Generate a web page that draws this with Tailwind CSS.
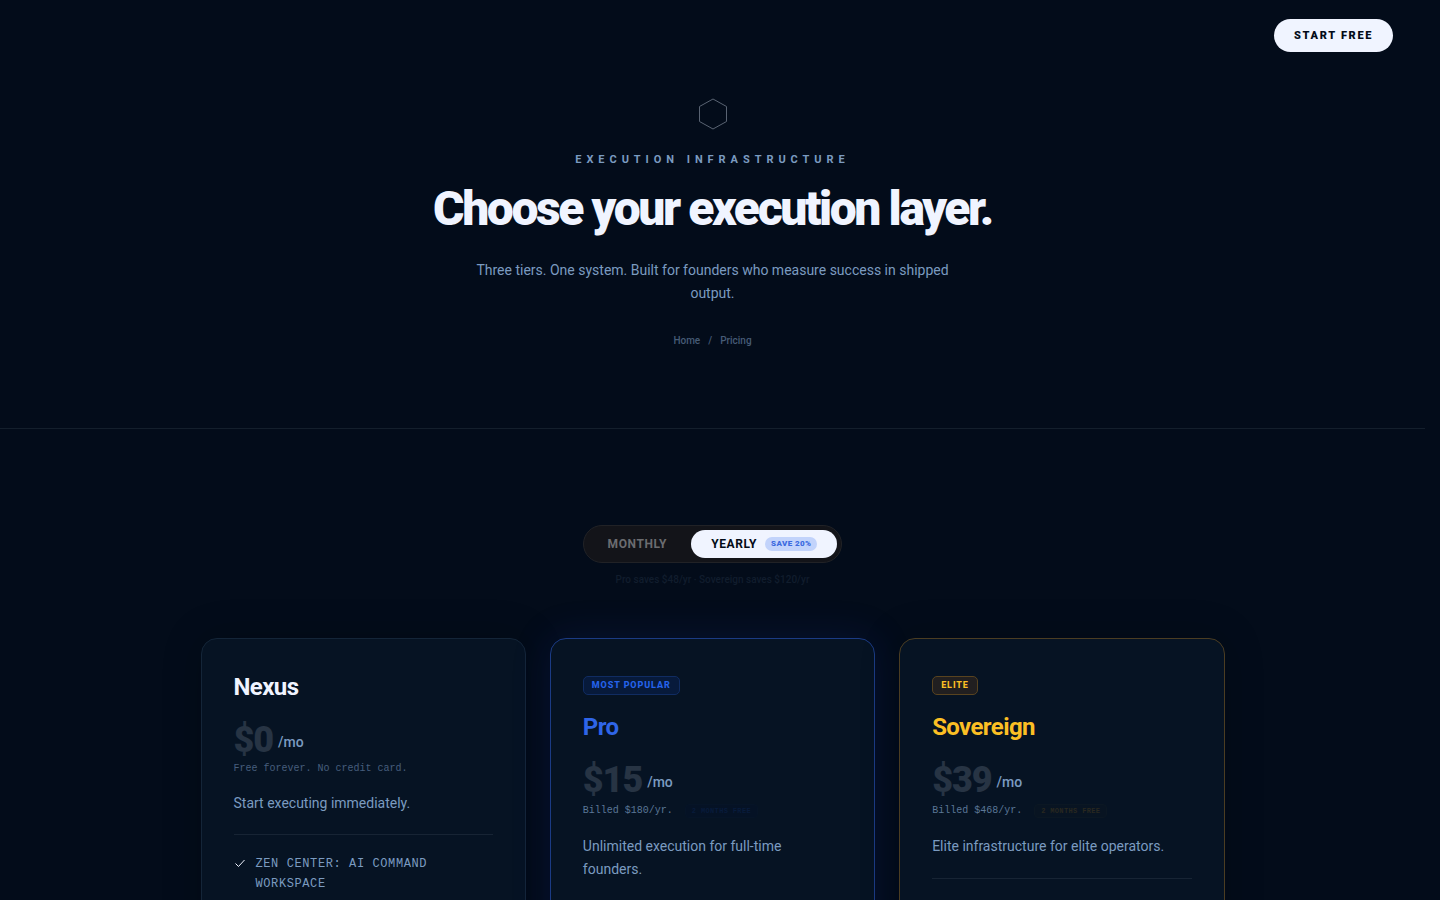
<!DOCTYPE html>
<html lang="en">
<head>
<meta charset="utf-8">
<meta name="viewport" content="width=device-width, initial-scale=1">
<title>Pricing</title>
<script src="https://cdn.jsdelivr.net/npm/@tailwindcss/browser@4"></script>
</head>
<body class="h-screen overflow-hidden bg-[#030c1a] pr-[15px] font-['Roboto',sans-serif] text-[#f0f4ff] antialiased">
<nav class="flex h-[70px] items-center justify-end px-8">
  <a href="#start" class="flex h-[33px] items-center rounded-full bg-[#f0f4ff] px-5 pt-0.5 text-[11px] font-black tracking-[0.15em] text-[#030b18]">START FREE</a>
</nav>

<header class="flex flex-col items-center border-b border-[#141f2c] px-6 pt-7 pb-[79px] text-center">
  <svg class="size-8" viewBox="0 0 32 32" fill="none" stroke="#596372" stroke-width="1" aria-hidden="true"><path d="M16 1 29.500 8.500V23.500L16 31 2.500 23.500V8.500Z"/></svg>
  <p class="mt-[21px] text-[11px] leading-[18px] font-bold tracking-[0.45em] text-[#7b9bc0]">EXECUTION INFRASTRUCTURE</p>
  <h1 class="mt-4 text-5xl leading-[48px] font-black tracking-[-0.05em]">Choose your execution layer.</h1>
  <p class="mt-[26px] max-w-lg text-sm leading-[23px] text-[#7b9bc0]">Three tiers. One system. Built for founders who measure success in shipped output.</p>
  <nav aria-label="Breadcrumb" class="mt-7 flex gap-2 text-[10px] leading-4 font-medium text-[#465b76]">
    <a href="#home">Home</a><span>/</span><a href="#pricing">Pricing</a>
  </nav>
</header>

<main class="px-6 pt-24">
  <div class="flex flex-col items-center">
    <div class="flex gap-1 rounded-full border border-[#212226] bg-[#131419] p-1 text-xs font-bold tracking-[0.05em]">
      <button type="button" class="flex h-7 items-center rounded-full px-5 text-[#6b6c70]">MONTHLY</button>
      <button type="button" class="flex h-7 items-center gap-2 rounded-full bg-[#f0f4ff] px-5 text-[#030b18]">YEARLY
        <span class="rounded-full bg-[#c2d3fb] px-1.5 text-[8px] leading-[14px] font-black tracking-[0.05em] text-[#3b6ae0]">SAVE 20%</span>
      </button>
    </div>
    <p class="mt-[9px] text-[10px] leading-4 font-medium text-[#111d2d]">Pro saves $48/yr · Sovereign saves $120/yr</p>
  </div>

  <div class="mx-auto mt-[50px] grid max-w-5xl grid-cols-3 gap-6">
    <article class="h-[640px] rounded-2xl border border-[#142538] bg-[#061323] p-8 shadow-[0_0_40px_rgba(0,0,0,0.2)]">
      <h2 class="text-2xl leading-8 font-bold tracking-[-0.025em]">Nexus</h2>
      <p class="mt-[17px] flex items-center gap-[5px] text-4xl leading-10 font-black tracking-[-0.03em] text-[#273444]">$0<span class="pt-1 text-sm font-medium tracking-normal text-[#7b9bc0]">/mo</span></p>
      <p class="h-[18px] font-['Liberation_Mono',monospace] text-[10px] leading-[18px] text-[#465e7d]">Free forever. No credit card.</p>
      <p class="mt-3.5 text-sm leading-[23px] text-[#7b9bc0]">Start executing immediately.</p>
      <ul class="mt-[19px] border-t border-[#172434] pt-[19px] font-['Liberation_Mono',monospace] text-xs leading-5 tracking-[0.05em] text-[#7b9bc0]">
        <li class="flex gap-2.5"><svg class="mt-[3px] size-3 shrink-0" viewBox="0 0 12 12" fill="none" stroke="#f0f4ff" stroke-width="1" aria-hidden="true"><path d="M1.500 6.500 4.500 9.500 10.500 3"/></svg>ZEN CENTER: AI COMMAND WORKSPACE</li>
      </ul>
    </article>

    <article class="h-[640px] rounded-2xl border border-[#1b3b84] bg-[#061323] p-8 shadow-[0_0_40px_rgba(37,50,180,0.16)]">
      <div class="flex h-10 pt-[5px]"><span class="h-[19px] rounded-[5px] border border-[#102c62] bg-[#071a3b] px-2 text-[9px] leading-[17px] font-extrabold tracking-[0.1em] text-[#2563eb]">MOST POPULAR</span></div>
      <h2 class="text-2xl leading-8 font-bold tracking-[-0.025em] text-[#2f65e8]">Pro</h2>
      <p class="mt-[17px] flex items-center gap-[5px] text-4xl leading-10 font-black tracking-[-0.03em] text-[#273444]">$15<span class="pt-1 text-sm font-medium tracking-normal text-[#7b9bc0]">/mo</span></p>
      <p class="flex h-[21px] items-center gap-3 font-['Liberation_Mono',monospace] text-[10px] text-[#5b7797]">Billed $180/yr.<span class="rounded border border-[#061427] bg-[#051225] px-1.5 text-[7px] leading-3 font-bold tracking-[0.05em] text-[#081b3b]">2 MONTHS FREE</span></p>
      <p class="mt-3.5 text-sm leading-[23px] text-[#7b9bc0]">Unlimited execution for full-time founders.</p>
    </article>

    <article class="h-[640px] rounded-2xl border border-[#4b3d22] bg-[#061323] p-8 shadow-[0_0_40px_rgba(0,0,0,0.2)]">
      <div class="flex h-10 pt-[5px]"><span class="h-[19px] rounded-[5px] border border-[#58431f] bg-[#211f20] px-2 text-[9px] leading-[17px] font-extrabold tracking-[0.1em] text-[#fbbf24]">ELITE</span></div>
      <h2 class="text-2xl leading-8 font-bold tracking-[-0.025em] text-[#fbbf24]">Sovereign</h2>
      <p class="mt-[17px] flex items-center gap-[5px] text-4xl leading-10 font-black tracking-[-0.03em] text-[#273444]">$39<span class="pt-1 text-sm font-medium tracking-normal text-[#7b9bc0]">/mo</span></p>
      <p class="flex h-[21px] items-center gap-3 font-['Liberation_Mono',monospace] text-[10px] text-[#5b7797]">Billed $468/yr.<span class="rounded border border-[#0b1723] bg-[#081422] px-1.5 text-[7px] leading-3 font-bold tracking-[0.05em] text-[#292820]">2 MONTHS FREE</span></p>
      <p class="mt-3.5 text-sm leading-[23px] text-[#7b9bc0]">Elite infrastructure for elite operators.</p>
      <hr class="mt-5 border-[#172434]">
    </article>
  </div>
</main>
</body>
</html>
